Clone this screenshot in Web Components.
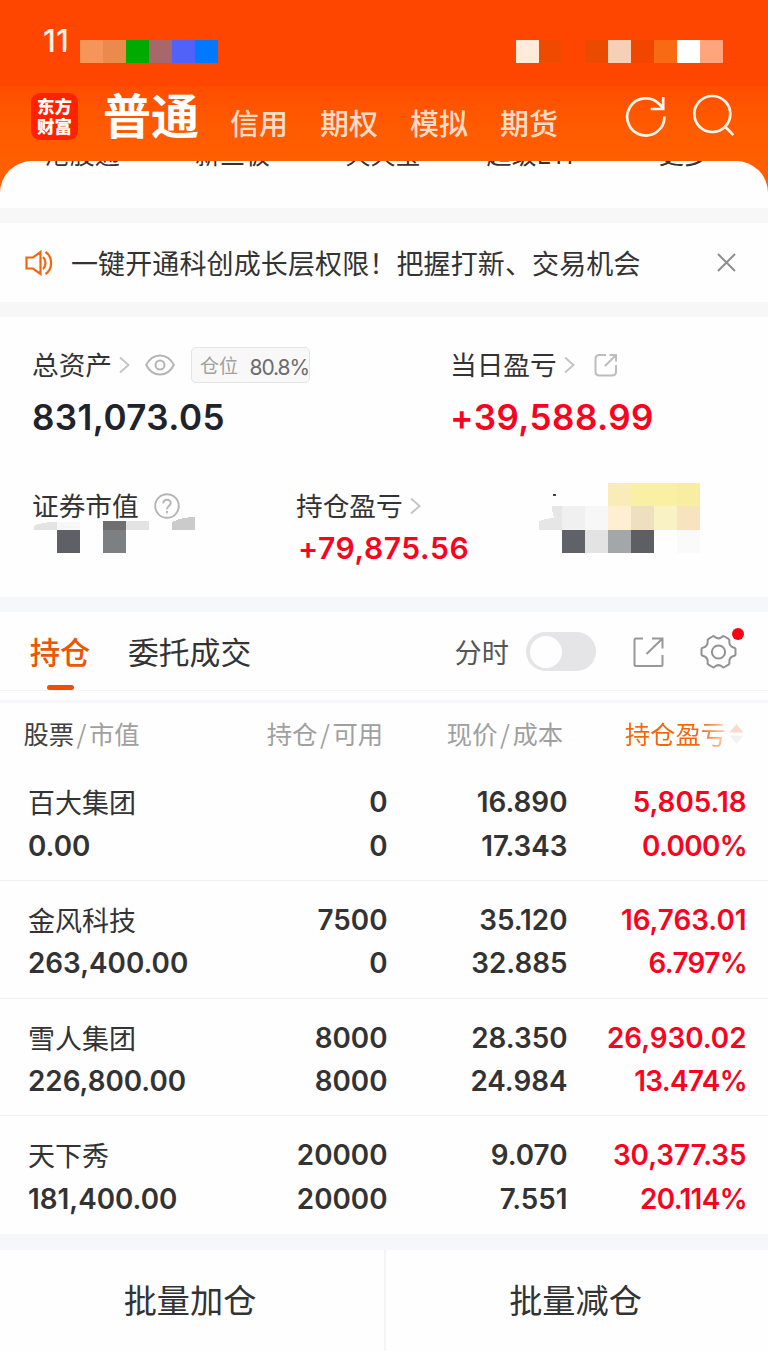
<!DOCTYPE html>
<html lang="zh-CN">
<head>
<meta charset="utf-8">
<meta name="viewport" content="width=device-width">
<title>普通交易</title>
<style>
  html, body {
    margin: 0;
    padding: 0;
  }
  body {
    width: 768px;
    height: 1351px;
    overflow: hidden;
    background: #fefefe;
    color: #333;
    font-family: "Noto Sans CJK SC", sans-serif;
  }
</style>
</head>
<body>
<trade-page></trade-page>

<script>
  const NUM = `font-family: Inter, "Liberation Sans", sans-serif;`;

  class BaseElement extends HTMLElement {
    constructor() {
      super();
      this.attachShadow({ mode: "open" });
    }
    connectedCallback() {
      this.shadowRoot.innerHTML = this.render();
    }
    attr(name) {
      return this.getAttribute(name) || "";
    }
  }

  // row of square colour cells, "-" leaves a cell empty
  class ColorCells extends BaseElement {
    static TAG = "color-cells";
    render() {
      const cells = this.attr("colors").split(" ")
        .map(c => `<i style="background:${c === "-" ? "transparent" : c}"></i>`).join("");
      return `
      <style>
        :host { display: flex; }
        i { width: 23px; height: 23px; }
      </style>${cells}`;
    }
  }

  class StatusBar extends BaseElement {
    static TAG = "status-bar";
    render() {
      return `
      <style>
        :host {
          display: flex;
          height: 86px;
          box-sizing: border-box;
          padding: 0 45px 0 43px;
          background: #ff4601;
        }
        .time {
          width: 27px;
          margin: 22px 10px 0 0;
          height: 37px;
          line-height: 37px;
          overflow: hidden;
          white-space: nowrap;
          color: #fff1e8;
          font-weight: 500;
          font-size: 31px;
          letter-spacing: .2px;
          ${NUM}
          clip-path: polygon(0 0, 100% 0, 95% 45%, 84% 85%, 84% 100%, 0 100%);
        }
        color-cells { margin-top: 39.6px; }
        .right { margin-left: auto; }
      </style>
      <span class="time">11</span>
      <color-cells colors="#f6955a #ea8a4c #00aa00 #a9666b #5062f8 #0079ff"></color-cells>
      <color-cells class="right" colors="#ffeadb #ef4a00 - #ea4b00 #f7cfb7 #f04600 #f86a13 #ffffff #ffa57d"></color-cells>`;
    }
  }

  class AccountNav extends BaseElement {
    static TAG = "account-nav";
    render() {
      return `
      <style>
        :host {
          display: flex;
          height: 75px;
          box-sizing: border-box;
          padding: 0 33px 0 31px;
          background: linear-gradient(#ff4d00, #ff5a00 50%, #ff5f00);
          color: #ffdcc6;
        }
        .logo {
          width: 47px;
          height: 47px;
          margin-top: 7px;
          border-radius: 9px;
          background: #ff2200;
          color: #fff;
          font-size: 17.5px;
          font-weight: 900;
          line-height: 20px;
          text-align: center;
          box-sizing: border-box;
          padding-top: 3px;
        }
        b {
          margin: -1px 0 0 25px;
          width: 97px;
          font-size: 48px;
          line-height: 56px;
          font-weight: 700;
          color: #fff;
        }
        a {
          width: 58px;
          height: 42px;
          margin: 15px 0 0 32px;
          font-size: 29px;
          line-height: 42px;
          font-weight: 500;
        }
        b + a { margin-left: 30px; }
        svg { display: block; margin-top: 8px; }
        .refresh { margin-left: auto; }
        .search { margin-left: 25px; }
      </style>
      <div class="logo">东方<br>财富</div>
      <b>普通</b><a>信用</a><a>期权</a><a>模拟</a><a>期货</a>
      <svg class="refresh" width="42" height="44" viewBox="0 0 42 44" fill="none" stroke="#fff4ea" stroke-width="2.7">
        <path d="M39.4 22.6A18.6 18.6 0 1 1 34.2 10L38 14M38.2 3v12h-12.500"/>
      </svg>
      <svg class="search" width="43" height="44" viewBox="0 0 43 44" fill="none" stroke="#fff4ea" stroke-width="2.7">
        <circle cx="20.3" cy="20" r="18"/><path d="M33 32.5l8.300 8.600"/>
      </svg>`;
    }
  }

  // bottom edge of the shortcut grid, scrolled under the header
  class ShortcutStrip extends BaseElement {
    static TAG = "shortcut-strip";
    render() {
      return `
      <style>
        :host { display: block; background: #ff5f00; }
        div {
          height: 47px;
          overflow: hidden;
          display: grid;
          grid-template-columns: repeat(5, 150.4px);
          padding-left: 7px;
          border-radius: 32px 32px 0 0;
          background: #fefefe;
          text-align: center;
          font-size: 25px;
          line-height: 30px;
        }
        span { margin-top: -23px; }
      </style>
      <div><span>港股通</span><span>新三板</span><span>天天宝</span><span>超级ETF</span><span>更多</span></div>`;
    }
  }

  class NoticeBar extends BaseElement {
    static TAG = "notice-bar";
    render() {
      return `
      <style>
        :host {
          display: flex;
          align-items: center;
          height: 79px;
          padding: 0 32px 0 24px;
          border: solid #f7f7f7;
          border-width: 15px 0;
        }
        p { margin: 0 0 0 18px; font-size: 27px; letter-spacing: .12px; white-space: nowrap; }
        .close { margin-left: auto; }
      </style>
      <svg width="29" height="26" viewBox="0 0 29 26" fill="none" stroke="#f56510" stroke-width="2.2">
        <path d="M2.5 7.5H9l7.500-5.500v22L9 18.500H2.500z"/>
        <path d="M19 7c3.300 3 3.300 9 0 12M21.500 2c7.500 5 7.500 17 0 22"/>
      </svg>
      <p><slot></slot></p>
      <svg class="close" width="19" height="19" viewBox="0 0 19 19" stroke="#8d8d8d" stroke-width="2">
        <path d="M1 1l17 17M18 1L1 18"/>
      </svg>`;
    }
  }

  class AssetPanel extends BaseElement {
    static TAG = "asset-panel";
    render() {
      const chevron = `<svg class="chev" width="11" height="18" viewBox="0 0 11 18" fill="none" stroke="#c4c4c4" stroke-width="1.9"><path d="M1 1.5l8.500 7.500L1 16.500"/></svg>`;
      return `
      <style>
        :host { display: block; height: 252px; padding: 28px 0 0 32px; }
        .row { display: grid; height: 141px; }
        .top { grid-template-columns: 418px 1fr; }
        .bottom { grid-template-columns: 264px 243px 1fr; }
        .label { display: flex; align-items: center; height: 40px; font-size: 26.7px; line-height: 36px; }
        .label span { position: relative; top: -1px; }
        .num { ${NUM} font-weight: 600; white-space: nowrap; }
        .top .num { font-size: 35px; line-height: 65px; letter-spacing: .45px; }
        .bottom .num { font-size: 30px; line-height: 45px; padding-left: 2px; letter-spacing: .6px; }
        .red { color: #f90320; }
        .dark { color: #20232b; }
        .chev { margin-left: 7px; }
        .eye { margin-left: 15px; }
        .tag {
          display: flex;
          align-items: center;
          box-sizing: border-box;
          width: 119px;
          height: 36px;
          margin-left: 16px;
          padding-left: 8px;
          border: 1.5px solid #e4e4e4;
          border-radius: 5px;
          background: #f8f8f8;
          color: #a0a0a0;
          font-size: 19px;
          white-space: nowrap;
        }
        .tag em { ${NUM} font-style: normal; color: #6c6c6c; font-size: 21px; letter-spacing: -1.1px; margin: 5px 0 0 11.5px; }
        .share { margin-left: 19px; }
        .help { margin-left: 15px; }
        .tiles { display: block; }
        .left { margin-top: -9px; }
      </style>
      <div class="row top">
        <div>
          <div class="label"><span>总资产</span>${chevron}
            <svg class="eye" width="30" height="22" viewBox="0 0 30 22" fill="none" stroke="#b5b5b5" stroke-width="2">
              <path d="M1.2 11C4.500 4.500 9.500 1.500 15 1.500S25.500 4.500 28.800 11C25.500 17.500 20.500 20.500 15 20.500S4.500 17.500 1.200 11z"/>
              <circle cx="15" cy="11" r="4.5"/>
            </svg>
            <div class="tag">仓位<em>80.8%</em></div>
          </div>
          <div class="num dark">831,073.05</div>
        </div>
        <div>
          <div class="label"><span>当日盈亏</span>${chevron}
            <svg class="share" width="24" height="24" viewBox="0 0 24 24" fill="none" stroke="#bdbdbd" stroke-width="2">
              <path d="M12 2H5.500Q1.500 2 1.500 6v12.500q0 4 4 4H18q4 0 4-4V12M11 13L22 2M15.500 2H22v6.500"/>
            </svg>
          </div>
          <div class="num red">+39,588.99</div>
        </div>
      </div>
      <div class="row bottom">
        <div>
          <div class="label"><span>证券市值</span>
            <svg class="help" width="26" height="26" viewBox="0 0 26 26" fill="none" stroke="#b5b5b5" stroke-width="1.9">
              <circle cx="13" cy="13" r="11.8"/>
              <path d="M9.3 10.500c0-5 7.400-5 7.400-.4 0 3-3.700 3-3.700 6.200M13 18v2.200"/>
            </svg>
          </div>
          <svg class="tiles left" width="165" height="37" viewBox="32 517 165 37" shape-rendering="crispEdges">
            <path fill="#e3e3e3" d="M34 530v-4q6-4 23-4v8z"/>
            <path fill="#f7f7f7" d="M57 522h23v8H57z"/>
            <path fill="#6f6f6f" d="M103 521h23v9h-23z"/>
            <path fill="#e3e3e3" d="M126 521h23v9h-23z"/>
            <path fill="#cbcbcb" d="M172 530v-8q10-5 23-5v13z"/>
            <path fill="#5e6065" d="M57 530h23v23H57z"/>
            <path fill="#7c8083" d="M103 530h23v23h-23z"/>
          </svg>
        </div>
        <div>
          <div class="label"><span>持仓盈亏</span>${chevron}</div>
          <div class="num red">+79,875.56</div>
        </div>
        <svg class="tiles" width="200" height="84" viewBox="539 486 200 84" overflow="visible" shape-rendering="crispEdges">
          <path fill="#faecb9" d="M608 483h23v23h-23z"/>
          <path fill="#faf0a3" d="M631 483h46v23h-46z"/>
          <path fill="#f9eda1" d="M677 483h23v23h-23z"/>
          <path fill="#e6e6e6" d="M539 530v-9q7-3 15-3-2-6-2-12h10v24z"/>
          <path fill="#f0f0f0" d="M562 506h23v24h-23z"/>
          <path fill="#f7f7f7" d="M585 506h23v24h-23z"/>
          <path fill="#feefd3" d="M608 506h23v24h-23z"/>
          <path fill="#eedfc0" d="M631 506h23v24h-23z"/>
          <path fill="#f9f2c4" d="M654 506h23v24h-23z"/>
          <path fill="#f7e3bd" d="M677 506h23v24h-23z"/>
          <path fill="#5f6268" d="M562 530h23v23h-23z"/>
          <path fill="#e3e3e3" d="M585 530h23v23h-23z"/>
          <path fill="#a2a8a9" d="M608 530h23v23h-23z"/>
          <path fill="#5d5f64" d="M631 530h23v23h-23z"/>
          <path fill="#fafafa" d="M677 530h23v23h-23z"/>
          <path fill="#444" d="M553 494h3v2h-3z"/>
        </svg>
      </div>`;
    }
  }

  class PositionTabs extends BaseElement {
    static TAG = "position-tabs";
    render() {
      return `
      <style>
        :host {
          display: flex;
          height: 78px;
          padding: 0 30px;
          border-top: 15px solid #f5f7fa;
          border-bottom: 1px solid #f4f4f4;
          white-space: nowrap;
          font-size: 30.8px;
          line-height: 78px;
        }
        .tab { display: flex; flex-direction: column; align-items: center; width: 60px; color: #ee5500; font-weight: 500; font-size: 30.3px; }
        .tab span { height: 73px; }
        .tab i { width: 27px; height: 5.5px; border-radius: 3px; background: #ee5000; }
        .orders { margin-left: 38px; }
        .minute { margin-left: auto; font-size: 27.2px; color: #555; }
        .toggle {
          width: 70px;
          height: 39px;
          margin: 20px 0 0 17px;
          box-sizing: border-box;
          padding: 3.5px;
          border-radius: 20px;
          background: #e5e5e7;
        }
        .toggle i { display: block; width: 32px; height: 32px; border-radius: 50%; background: #fefefe; }
        .share { margin: 25px 0 0 37px; }
        .gear { position: relative; width: 37px; margin: 22px 1px 0 35px; }
        .gear svg { display: block; }
        .gear i { position: absolute; left: 32px; top: -6px; width: 12px; height: 12px; border-radius: 50%; background: #fb0013; }
      </style>
      <div class="tab"><span>持仓</span><i></i></div>
      <div class="orders">委托成交</div>
      <div class="minute">分时</div>
      <div class="toggle"><i></i></div>
      <svg class="share" width="32" height="31" viewBox="0 0 32 31" fill="none" stroke="#989898" stroke-width="2">
        <path d="M10 1.500H3Q1.500 1.500 1.500 3v24.500Q1.500 29 3 29h25q1.500 0 1.500-1.500V18M13.500 17L29.500 1.500M19 1.500h10.500v10"/>
      </svg>
      <div class="gear">
        <svg width="37" height="36" viewBox="0 0 37 36" fill="none" stroke="#929292" stroke-width="2" stroke-linejoin="round">
          <path d="M12.500 2.500Q14 1.500 15 3q3.500 2.800 7 0 1-1.500 2.500-.5l4 2.300q1.500 1 .8 2.700-.2 4.500 4.200 6 2 .3 2 2v4.500q0 1.700-2 2-4.400 1.500-4.200 6 .7 1.700-.8 2.700l-4 2.300q-1.500 1-2.500-.5-3.500-2.800-7 0-1 1.500-2.500.5l-4-2.300q-1.500-1-.8-2.700.2-4.500-4.200-6-2-.3-2-2v-4.500q0-1.700 2-2 4.400-1.500 4.200-6-.7-1.700.8-2.700z"/>
          <circle cx="18.5" cy="18" r="6.6"/>
        </svg>
        <i></i>
      </div>`;
    }
  }

  class HoldingsHead extends BaseElement {
    static TAG = "holdings-head";
    render() {
      return `
      <style>
        :host {
          display: grid;
          grid-template-columns: 204px 155.5px 180px 181px;
          height: 60px;
          margin-top: 9px;
          padding-left: 23.5px;
          border-top: 3px solid #f5f8fa;
          color: #a0a0a0;
          font-size: 25.3px;
          line-height: 61.5px;
          text-align: right;
          white-space: nowrap;
        }
        .first { text-align: left; }
        .first b { font-weight: 400; color: #404040; }
        s { text-decoration: none; margin: 0 2.5px; }
        .sort { display: flex; justify-content: flex-end; align-items: center; }
        .sort span {
          background: linear-gradient(90deg, #f2660f 76%, #fbd5bd 100%);
          -webkit-background-clip: text;
          background-clip: text;
          color: transparent;
        }
        svg { margin-left: 3px; }
      </style>
      <div class="first"><b>股票</b><s>/</s>市值</div>
      <div>持仓<s>/</s>可用</div>
      <div>现价<s>/</s>成本</div>
      <div class="sort"><span>持仓盈亏</span>
        <svg width="15" height="22" viewBox="0 0 15 22">
          <path d="M7.500 1l7 8.500H.5z" fill="#fcdac8"/><path d="M7.500 21l7-8.500H.5z" fill="#f2f2f2"/>
        </svg>
      </div>`;
    }
  }

  class HoldingRow extends BaseElement {
    static TAG = "holding-row";
    render() {
      const cell = (name, cls = "") => {
        const [a, b] = this.attr(name).split(" ");
        return `<div class="${cls}"><span>${a}</span><span class="${b.endsWith("%") ? "pct" : ""}">${b}</span></div>`;
      };
      return `
      <style>
        :host {
          display: grid;
          grid-template-columns: 200px 159.5px 180px 179px;
          height: 117.8px;
          box-sizing: border-box;
          padding: 18px 0 0 28px;
          border-bottom: 1.2px solid #f0f0f0;
          ${NUM}
          font-size: 27.8px;
          font-weight: 600;
          line-height: 43.5px;
          text-align: right;
        }
        :host(:last-of-type) { border: 0; }
        span { display: block; height: 43.5px; }
        .first { text-align: left; }
        .name { font: 400 27px/42px "Noto Sans CJK SC", sans-serif; }
        .red { color: #f90320; }
        .pct { letter-spacing: -.6px; margin-right: -.5px; }
      </style>
      <div class="first"><span class="name"><slot></slot></span><span>${this.attr("value")}</span></div>
      ${cell("amount")}${cell("price")}${cell("profit", "red")}`;
    }
  }

  class BatchActions extends BaseElement {
    static TAG = "batch-actions";
    render() {
      return `
      <style>
        :host {
          display: grid;
          grid-template-columns: 1fr 1fr;
          height: 101px;
          border-top: 16px solid #f5f7fa;
          text-align: center;
          font-size: 33.2px;
          line-height: 98px;
        }
        div { padding-right: 4px; }
        div + div { padding-right: 3px; border-left: 2px solid #f4f4f6; }
      </style>
      <div>批量加仓</div><div>批量减仓</div>`;
    }
  }

  class TradePage extends BaseElement {
    static TAG = "trade-page";
    render() {
      return `
      <style>
        :host { display: flex; flex-direction: column; width: 768px; }
      </style>
      <status-bar></status-bar>
      <account-nav></account-nav>
      <shortcut-strip></shortcut-strip>
      <notice-bar>一键开通科创成长层权限！把握打新、交易机会</notice-bar>
      <asset-panel></asset-panel>
      <position-tabs></position-tabs>
      <holdings-head></holdings-head>
      <holding-row value="0.00" amount="0 0" price="16.890 17.343" profit="5,805.18 0.000%">百大集团</holding-row>
      <holding-row value="263,400.00" amount="7500 0" price="35.120 32.885" profit="16,763.01 6.797%">金风科技</holding-row>
      <holding-row value="226,800.00" amount="8000 8000" price="28.350 24.984" profit="26,930.02 13.474%">雪人集团</holding-row>
      <holding-row value="181,400.00" amount="20000 20000" price="9.070 7.551" profit="30,377.35 20.114%">天下秀</holding-row>
      <batch-actions></batch-actions>`;
    }
  }

  [ColorCells, StatusBar, AccountNav, ShortcutStrip, NoticeBar, AssetPanel, PositionTabs,
    HoldingsHead, HoldingRow, BatchActions, TradePage]
    .forEach(el => customElements.define(el.TAG, el));
</script>
</body>
</html>
